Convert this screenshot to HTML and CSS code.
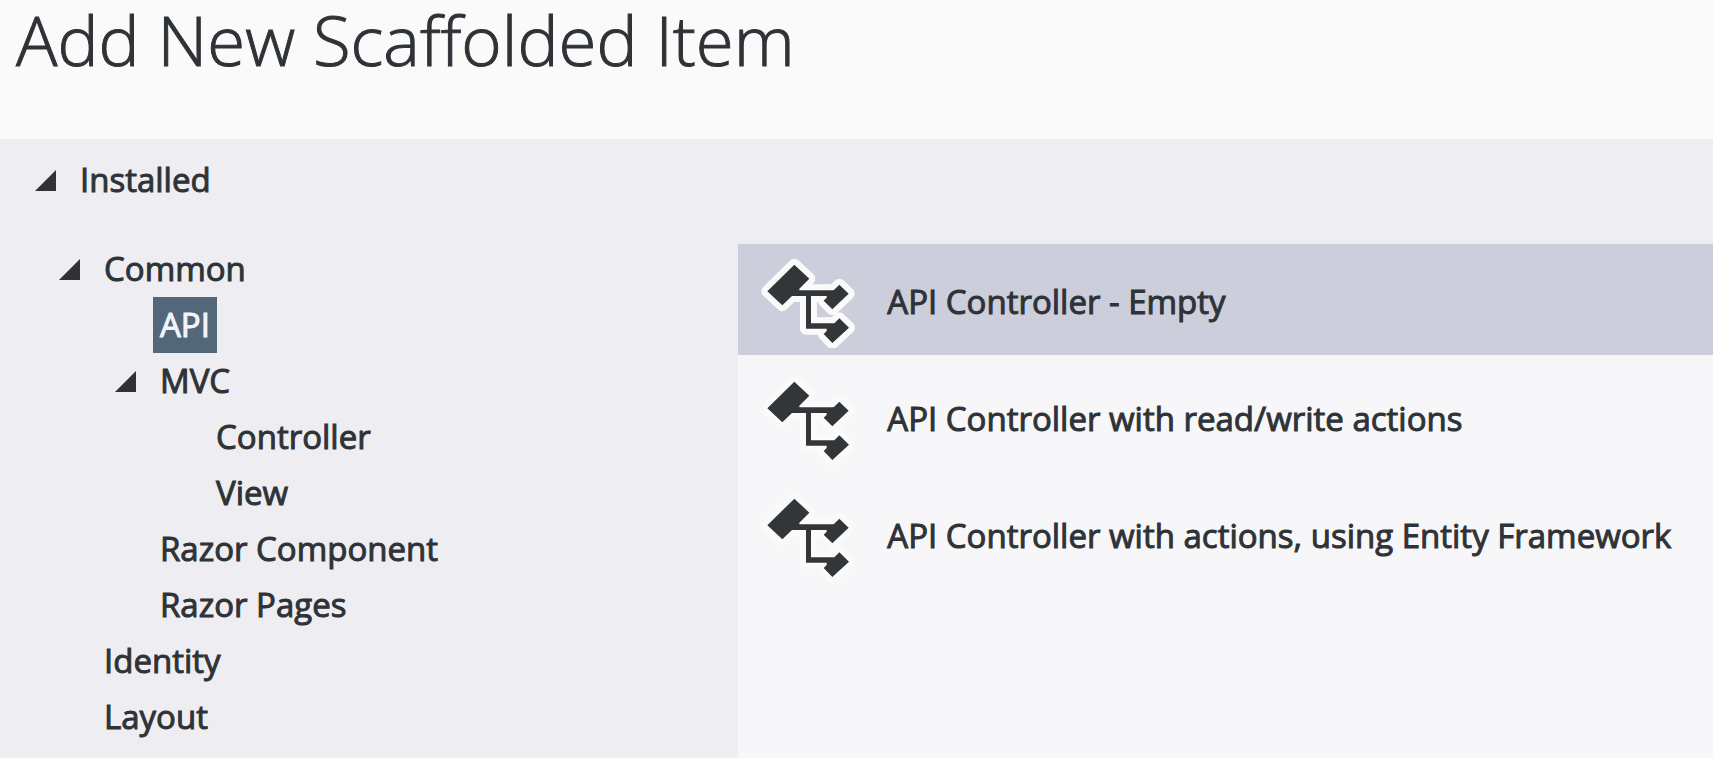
FILE: index.html
```html
<!DOCTYPE html>
<html lang="en">
<head>
<meta charset="utf-8">
<title>Add New Scaffolded Item</title>
<link rel="stylesheet" href="styles.css">
</head>
<body>
<svg class="defs" aria-hidden="true">
  <symbol id="controller" viewBox="90 50 288 288">
    <g class="halo">
      <path d="M193 88L238 130L157 210L112 168Z"/>
      <path d="M180 165H315V182H243V264H300V280H228V182H180Z"/>
      <path d="M328 148L356 175L307 222L281 196L290 187V165H311Z"/>
      <path d="M328 249L357 277L307 323L281 296L290 287V264H313Z"/>
    </g>
    <g class="ink">
      <path d="M193 88L238 130L208 160V165H315V182H243V264H313L328 249L357 277L307 323L281 296L290 287V280H228V182H186L157 210L112 168Z"/>
      <path d="M328 148L356 175L307 222L281 196L290 187V182L311 165Z"/>
    </g>
  </symbol>
  <symbol id="expanded" viewBox="0 0 21 21"><path d="M21 0V21H0Z"/></symbol>
</svg>
<header class="header"><h1 class="title">Add New Scaffolded Item</h1></header>
<main class="content">
  <nav class="tree" aria-label="Categories">
    <button class="node"><svg class="arrow"><use href="#expanded"/></svg><span>Installed</span></button>
    <ul class="level first">
      <li>
        <button class="node"><svg class="arrow"><use href="#expanded"/></svg><span>Common</span></button>
        <ul class="level">
          <li><button class="node leaf"><span class="selected">API</span></button></li>
          <li>
            <button class="node"><svg class="arrow"><use href="#expanded"/></svg><span>MVC</span></button>
            <ul class="level">
              <li><button class="node leaf"><span>Controller</span></button></li>
              <li><button class="node leaf"><span>View</span></button></li>
            </ul>
          </li>
          <li><button class="node leaf"><span>Razor Component</span></button></li>
          <li><button class="node leaf"><span>Razor Pages</span></button></li>
        </ul>
      </li>
      <li><button class="node leaf"><span>Identity</span></button></li>
      <li><button class="node leaf"><span>Layout</span></button></li>
    </ul>
  </nav>
  <section class="templates" aria-label="Templates">
    <button class="template active"><svg class="icon"><use href="#controller"/></svg><span class="name">API Controller - Empty</span></button>
    <button class="template"><svg class="icon"><use href="#controller"/></svg><span class="name">API Controller with read/write actions</span></button>
    <button class="template"><svg class="icon"><use href="#controller"/></svg><span class="name">API Controller with actions, using Entity Framework</span></button>
  </section>
</main>
</body>
</html>
```
FILE: styles.css
```css
* { box-sizing: border-box; }
body {
  margin: 0;
  min-height: 100vh;
  display: flex;
  flex-direction: column;
  background: #eeeef2;
  color: #2f3337;
  font-family: "Open Sans", "Noto Sans", sans-serif;
  -webkit-text-stroke: 1px currentColor;
}
.defs { position: absolute; width: 0; height: 0; }
.header { padding: 0 16px 61px; background: #fafafa; }
.title { margin: 0; font-size: 69px; line-height: 78px; font-weight: 300; }
.content { flex: 1; display: grid; grid-template-columns: minmax(0, 431fr) minmax(0, 569fr); }
.tree { padding-top: 13px; }
.level { margin: 0; padding: 0 0 0 56px; list-style: none; }
.first { padding-left: 24px; padding-top: 33px; }
button {
  border: 0;
  margin: 0;
  background: none;
  color: inherit;
  font: inherit;
  text-align: left;
  white-space: nowrap;
  cursor: pointer;
}
.node {
  display: flex;
  align-items: center;
  gap: 24px;
  width: 100%;
  height: 56px;
  padding: 0 0 0 35px;
  font-size: 33px;
  line-height: 56px;
}
.leaf { padding-left: 80px; }
.arrow { width: 21px; height: 21px; fill: #2f3337; }
.selected { margin-left: -7px; padding: 0 7px; background: #52677a; color: #f4f4f8; }
.templates {
  display: flex;
  flex-direction: column;
  gap: 6px;
  margin-top: 105px;
  background: #f7f7f9;
}
.template {
  display: flex;
  align-items: center;
  gap: 31px;
  min-height: 111px;
  padding: 0 0 0 22px;
  font-size: 33px;
}
.name { padding-top: 4px; }
.active { background: #cccedb; }
.icon { flex: none; width: 96px; height: 96px; }
.halo { fill: #fafafa; stroke: #fafafa; stroke-width: 36; stroke-linejoin: round; }
.ink { fill: #333638; }
```
